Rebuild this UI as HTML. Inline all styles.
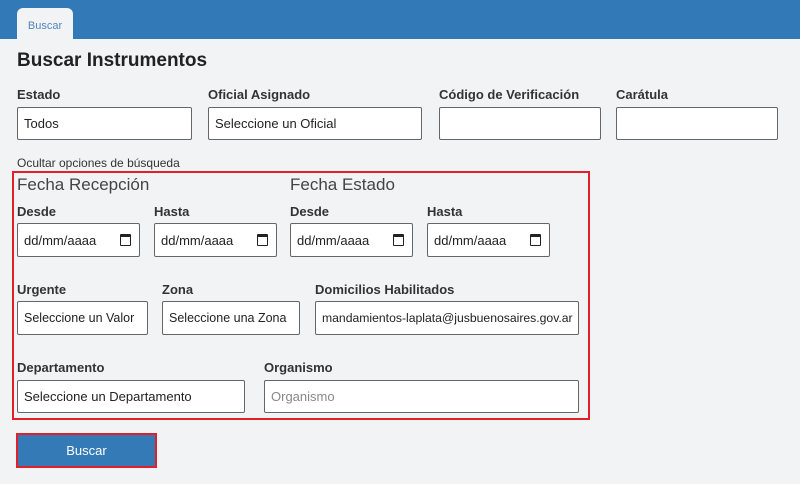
<!DOCTYPE html>
<html><head><meta charset="utf-8"><style>
body{margin:0;width:800px;height:484px;background:#f2f3f5;font-family:"Liberation Sans",sans-serif;position:relative;overflow:hidden;color:#333}
.a{position:absolute}
.hdr{left:0;top:0;width:800px;height:39px;background:#3279b7}
.tab{left:17px;top:8px;width:56px;height:31px;background:#f2f3f5;border-radius:6px 6px 0 0;font-size:11px;color:#4f86bd;text-align:center;line-height:36px}
h1{position:absolute;margin:0;left:17px;top:50px;font-size:19px;font-weight:bold;color:#222}
.l{position:absolute;font-size:13px;font-weight:bold;color:#333}
.i{position:absolute;box-sizing:border-box;border:1.5px solid #666;border-radius:2px;background:#fff;font-size:13px;color:#222;padding-left:6px;display:flex;align-items:center;white-space:nowrap;overflow:hidden}
.cal{position:absolute;right:8px;top:10px;width:9px;height:8px;border:1.5px solid #222;border-top-width:3px;border-radius:1px}
.h2{position:absolute;font-size:17px;color:#444}
</style></head><body>
<div class="a hdr"></div>
<div class="a tab">Buscar</div>
<h1>Buscar Instrumentos</h1>
<div class="l" style="left:17px;top:87px">Estado</div>
<div class="l" style="left:208px;top:87px">Oficial Asignado</div>
<div class="l" style="left:439px;top:87px">Código de Verificación</div>
<div class="l" style="left:616px;top:87px">Carátula</div>
<div class="i" style="left:17px;top:107px;width:175px;height:33px">Todos</div>
<div class="i" style="left:208px;top:107px;width:214px;height:33px">Seleccione un Oficial</div>
<div class="i" style="left:439px;top:107px;width:162px;height:33px"></div>
<div class="i" style="left:616px;top:107px;width:162px;height:33px"></div>
<div class="a" style="left:17px;top:156px;font-size:12px;color:#333">Ocultar opciones de búsqueda</div>
<div class="a" style="left:12px;top:171px;width:574px;height:245px;border:2px solid #e0202a"></div>
<div class="h2" style="left:17px;top:175px">Fecha Recepción</div>
<div class="h2" style="left:290px;top:175px">Fecha Estado</div>
<div class="l" style="left:17px;top:204px">Desde</div>
<div class="l" style="left:154px;top:204px">Hasta</div>
<div class="l" style="left:290px;top:204px">Desde</div>
<div class="l" style="left:427px;top:204px">Hasta</div>
<div class="i" style="left:17px;top:223px;width:123px;height:34px">dd/mm/aaaa<span class="cal"></span></div>
<div class="i" style="left:154px;top:223px;width:123px;height:34px">dd/mm/aaaa<span class="cal"></span></div>
<div class="i" style="left:290px;top:223px;width:123px;height:34px">dd/mm/aaaa<span class="cal"></span></div>
<div class="i" style="left:427px;top:223px;width:123px;height:34px">dd/mm/aaaa<span class="cal"></span></div>
<div class="l" style="left:17px;top:282px">Urgente</div>
<div class="l" style="left:162px;top:282px">Zona</div>
<div class="l" style="left:315px;top:282px">Domicilios Habilitados</div>
<div class="i" style="left:17px;top:301px;width:131px;height:34px;font-size:12.5px">Seleccione un Valor</div>
<div class="i" style="left:162px;top:301px;width:138px;height:34px;font-size:12.5px">Seleccione una Zona</div>
<div class="i" style="left:315px;top:301px;width:264px;height:34px;font-size:12.2px">mandamientos-laplata@jusbuenosaires.gov.ar</div>
<div class="l" style="left:17px;top:360px">Departamento</div>
<div class="l" style="left:264px;top:360px">Organismo</div>
<div class="i" style="left:17px;top:380px;width:228px;height:33px">Seleccione un Departamento</div>
<div class="i" style="left:264px;top:380px;width:315px;height:33px;color:#888">Organismo</div>
<div class="a" style="left:16px;top:433px;width:141px;height:35px;box-sizing:border-box;border:2px solid #e0202a;background:#337ab7;color:#fff;font-size:13px;text-align:center;line-height:31px">Buscar</div>
</body></html>
